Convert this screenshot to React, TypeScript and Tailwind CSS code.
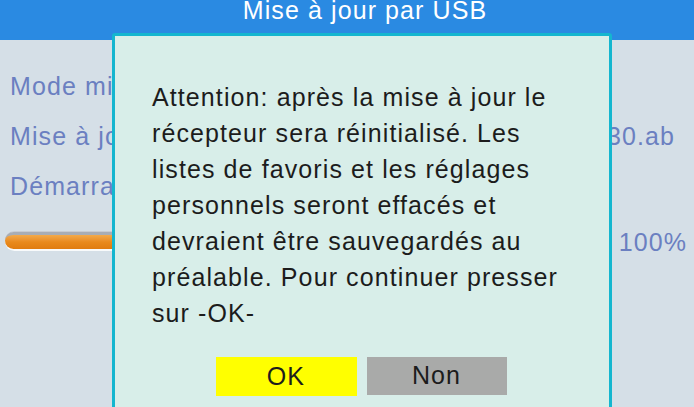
export default function App() {
  const lines = [
    'Attention: après la mise à jour le',
    'récepteur sera réinitialisé. Les',
    'listes de favoris et les réglages',
    'personnels seront effacés et',
    'devraient être sauvegardés au',
    'préalable. Pour continuer presser',
    'sur -OK-',
  ];

  return (
    <div className="relative h-[407px] w-[694px] overflow-hidden bg-[#d5dfe7] font-['Liberation_Sans',Arial,sans-serif] tracking-[1.1px]">
      <div className="flex h-[40px] justify-center bg-[#2a8ae2] pl-[36px]">
        <span className="-mt-[2px] text-[25px] leading-[25px] text-white">Mise à jour par USB</span>
      </div>

      <div className="flex flex-col pt-[21px] text-[25px] leading-[28px] text-[#6b7fc1]">
        <div className="flex h-[50px] items-center pl-[10px]">
          <span>Mode mise à jour</span>
        </div>
        <div className="flex h-[50px] items-center justify-between pl-[10px] pr-[19px]">
          <span>Mise à jour</span>
          <span>usb_update_30.ab</span>
        </div>
        <div className="flex h-[50px] items-center pl-[10px]">
          <span>Démarrage</span>
        </div>
        <div className="mt-[6px] flex h-[50px] items-center justify-between pl-[5px] pr-[7px]">
          <div className="relative h-[20px] w-[560px]">
            <div className="h-[19px] w-full rounded-full bg-[#f8fafb] shadow-[0_-1px_0_#c8ccd2]" />
            <div className="absolute left-0 top-0 h-[17px] w-full rounded-full border-t-[3px] border-[#a8adb5] bg-gradient-to-b from-[#f2a94a] via-[#e98a1c] to-[#e07c10]" />
          </div>
          <span>100%</span>
        </div>
      </div>

      <div className="absolute left-[112px] top-[33px] h-[390px] w-[500px] rounded-t-[3px] border-[3px] border-[#14b6cf] bg-[#d8eee9]">
        <div className="pl-[37px] pt-[43px] text-[25px] leading-[36px] text-[#1c1c1c]">
          {lines.map((line) => (
            <div key={line} className="whitespace-nowrap">
              {line}
            </div>
          ))}
        </div>
        <div className="mt-[26px] flex justify-center gap-[10px] pr-[2px] text-[25px] text-[#1c1c1c]">
          <button type="button" className="flex h-[39px] w-[141px] items-center justify-center bg-[#ffff00]">
            OK
          </button>
          <button type="button" className="flex h-[38px] w-[140px] items-center justify-center bg-[#a9aaa9]">
            Non
          </button>
        </div>
      </div>
    </div>
  );
}
